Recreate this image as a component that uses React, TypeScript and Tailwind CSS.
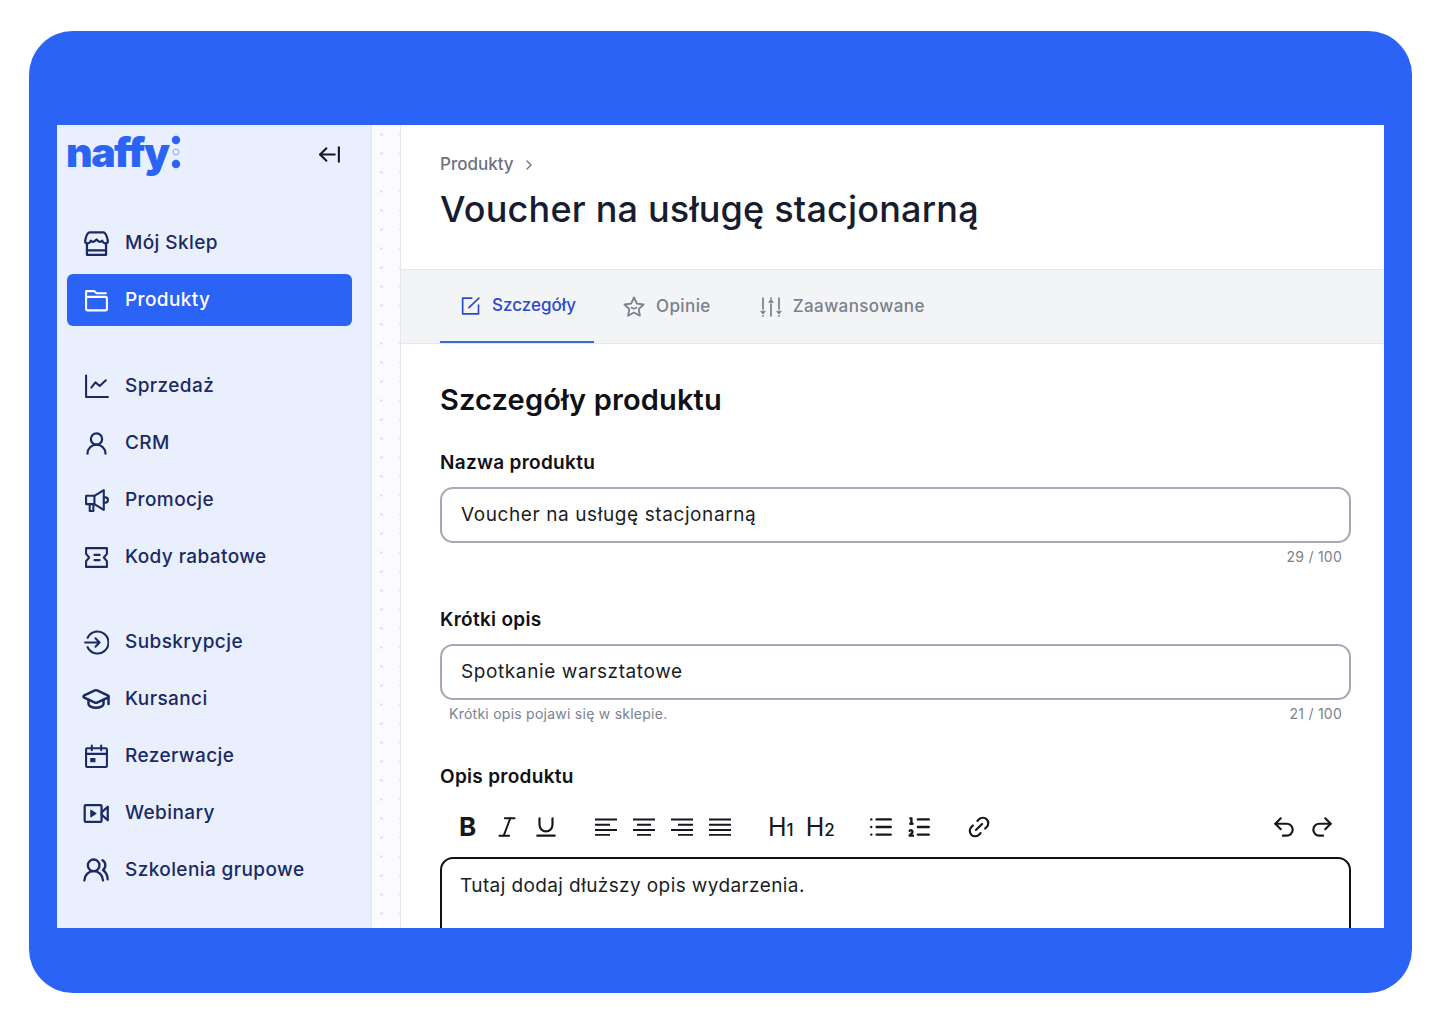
import {
  ArrowLeftFromLine,
  ChevronRight,
  GraduationCap,
  Italic,
  Link2,
  List,
  ListOrdered,
  Redo2,
  Underline,
  Undo2,
  UserRound,
  UsersRound,
} from 'lucide-react';
import type { ReactNode } from 'react';

const font = "font-['Inter','Liberation_Sans',sans-serif]";

function Svg({ children, className = 'w-[25px] h-[25px] shrink-0' }: { children: ReactNode; className?: string }) {
  return (
    <svg
      viewBox="0 0 24 24"
      fill="none"
      stroke="currentColor"
      strokeWidth={2}
      strokeLinecap="round"
      strokeLinejoin="round"
      className={className}
    >
      {children}
    </svg>
  );
}

const StoreIcon = () => (
  <Svg className="w-[27px] h-[27px] shrink-0">
    <path d="M6 2h12c2 0 3 2 4 7v2c-2 1.500-4 1-5-1.500-1 1.500-3 1.500-5-1-2 2.500-4 2.500-5 1-1 2.500-3 3-5 1.500V9c1-5 2-7 4-7z" />
    <path d="M3.500 12.500V22h17v-9.500M3.500 18h17" />
  </Svg>
);

const FolderIcon = () => (
  <Svg>
    <path d="M3 3h7l2 2h9" />
    <rect x="2" y="8.500" width="20" height="13" rx="1.500" />
    <path d="M2 8.500V3" />
  </Svg>
);

const ChartIcon = () => (
  <Svg>
    <path d="M2 1.500V22h21" />
    <path d="m7 13 4-5 4 3.500 6-5.500" />
  </Svg>
);

const MegaphoneIcon = () => (
  <Svg>
    <path d="M2 7.500h8L19 2v19l-9-5.500H2z" />
    <path d="M5.500 15.500V22H9v-6M19 9h1.500a1.500 1.500 0 0 1 0 5H19M10 7.500v8" />
  </Svg>
);

const TicketIcon = () => (
  <Svg>
    <path d="M2 3h20v5.500L19 12l3 3.500V21H2v-5.500L5 12 2 8.500z" />
    <path d="M10 9.500h5M10 14.500h5" />
  </Svg>
);

const SubscribeIcon = () => (
  <Svg>
    <path d="M3.500 7.500a10.500 10.500 0 1 1 0 9" />
    <path d="M1 12h14M11 8l4 4-4 4" />
  </Svg>
);

const CalendarIcon = () => (
  <Svg>
    <rect x="2" y="4" width="20" height="18" rx="1" />
    <path d="M2 9.500h20M7.500 1.500V6M16.500 1.500V6" />
    <path d="M6.500 14h4v3h-4z" fill="currentColor" strokeWidth={1} />
  </Svg>
);

const VideoIcon = () => (
  <Svg className="w-[27px] h-[27px] shrink-0">
    <rect x="1.500" y="4.500" width="15" height="15" rx="1" />
    <path d="m16.500 11 5.500-5v12l-5.500-5" />
    <path d="M7 9v6l4.500-3z" fill="currentColor" strokeWidth={1} />
  </Svg>
);

const PenSquareIcon = () => (
  <Svg className="w-[20px] h-[20px] shrink-0">
    <path d="M13 2.500H2v19h19V11" />
    <path d="M9.500 14 21.500 2.500" />
  </Svg>
);

const StarSmileIcon = () => (
  <Svg className="w-[24px] h-[24px] shrink-0">
    <path strokeWidth={1.800} d="m12 2.500 2.900 6.100 6.600.9-4.800 4.600 1.200 6.600L12 17.500l-5.900 3.200 1.200-6.600L2.500 9.500l6.600-.9z" />
    <path strokeWidth={1.600} d="M9.500 12.500c1.200 1.500 3.800 1.500 5 0" />
  </Svg>
);

const SortIcon = () => (
  <Svg className="w-[24px] h-[24px] shrink-0">
    <g strokeWidth={1.700}>
      <path d="M4 3v11M4 20.500v.5M12 3v.5M12 9v12M20 3v11M20 20.500v.5" />
      <path d="m2 16.500 2 2.500 2-2.500zM10 7l2-2.500L14 7zM18 16.500l2 2.500 2-2.500z" fill="currentColor" strokeWidth={1} />
    </g>
  </Svg>
);

// four-line align glyphs, lucide's current ones only have three
const alignPaths = {
  left: 'M1 3h22M1 9.300h15M1 15.600h22M1 21.500h15',
  center: 'M1 3h22M5 9.300h14M1 15.600h22M5 21.500h14',
  right: 'M1 3h22M8 9.300h15M1 15.600h22M8 21.500h15',
  justify: 'M1 3h22M1 9.300h22M1 15.600h22M1 21.500h22',
};

function AlignIcon({ kind }: { kind: keyof typeof alignPaths }) {
  return (
    <svg viewBox="0 0 24 24" className="w-[24px] h-[20px] shrink-0" fill="none" stroke="currentColor" strokeWidth={2.200} preserveAspectRatio="none">
      <path d={alignPaths[kind]} />
    </svg>
  );
}

function NavItem({ icon, label, active }: { icon: ReactNode; label: string; active?: boolean }) {
  return (
    <div
      className={`flex items-center gap-[17px] h-[52px] pl-[17px] rounded-md text-[19px] font-medium tracking-[0.4px] ${
        active ? 'bg-[#2b63f6] text-white' : 'text-[#1b2a63]'
      }`}
    >
      <span className="flex w-6 h-6 items-center justify-center">{icon}</span>
      <span>{label}</span>
    </div>
  );
}

function Sidebar() {
  return (
    <aside className="w-[315px] shrink-0 bg-[#e9effd] pl-[10px] pr-[19px] border-r border-[#dfe6f6]">
      <div className="flex items-center justify-between h-[58px] pr-[10px]">
        <div className="flex items-center gap-[2px] pt-[2px] -ml-[1px]">
          <span className="text-[41px] leading-none font-black tracking-[-1.500px] text-[#2b63f6] pb-[5px]">naffy</span>
          <svg viewBox="0 0 12 34" className="w-[12px] h-[34px] text-[#2b63f6] mb-[6px]">
            <circle cx="6" cy="5" r="4.200" fill="currentColor" />
            <circle cx="6" cy="17" r="3" fill="none" stroke="#8aa4e8" strokeWidth={1} />
            <circle cx="6" cy="29" r="4.200" fill="currentColor" />
          </svg>
        </div>
        <ArrowLeftFromLine className="w-[25px] h-[25px] text-[#111827]" strokeWidth={2} />
      </div>

      <div className="flex flex-col gap-[5px] mt-[34px]">
        <NavItem icon={<StoreIcon />} label="Mój Sklep" />
        <NavItem icon={<FolderIcon />} label="Produkty" active />
      </div>

      <div className="flex flex-col gap-[5px] mt-[34px]">
        <NavItem icon={<ChartIcon />} label="Sprzedaż" />
        <NavItem icon={<UserRound className="w-[27px] h-[27px] shrink-0" strokeWidth={2} />} label="CRM" />
        <NavItem icon={<MegaphoneIcon />} label="Promocje" />
        <NavItem icon={<TicketIcon />} label="Kody rabatowe" />
      </div>

      <div className="flex flex-col gap-[5px] mt-[33px]">
        <NavItem icon={<SubscribeIcon />} label="Subskrypcje" />
        <NavItem icon={<GraduationCap className="w-[30px] h-[30px] shrink-0" strokeWidth={2} />} label="Kursanci" />
        <NavItem icon={<CalendarIcon />} label="Rezerwacje" />
        <NavItem icon={<VideoIcon />} label="Webinary" />
        <NavItem icon={<UsersRound className="w-[28px] h-[28px] shrink-0" strokeWidth={2} />} label="Szkolenia grupowe" />
      </div>
    </aside>
  );
}

function Field({ label, value, hint, count }: { label: string; value: string; hint?: string; count: string }) {
  return (
    <div>
      <div className="text-[19px] leading-[26px] font-semibold tracking-[0.3px] text-[#0f1115]">{label}</div>
      <div className="mt-[11px] flex items-center h-[56px] border-2 border-[#a3a9b5] rounded-[13px] pl-[19px] text-[19px] tracking-[0.6px] text-[#1a1d24]">
        {value}
      </div>
      <div className="flex justify-between h-[27px] items-center px-[9px] text-[14px] tracking-[0.25px] text-[#7b8290]">
        <span>{hint}</span>
        <span>{count}</span>
      </div>
    </div>
  );
}

function Toolbar() {
  const cls = 'w-[26px] h-[26px] shrink-0';
  return (
    <div className="flex items-center justify-between h-[40px] mt-[17px] pl-[19px] pr-[16px] text-[#15171c]">
      <div className="flex items-center">
        <span className="w-[22px] text-[26px] font-bold leading-none">B</span>
        <Italic className={`${cls} ml-[13px] w-[20px]`} strokeWidth={1.800} />
        <Underline className={`${cls} ml-[13px] w-[24px]`} strokeWidth={2} />
        <div className="flex gap-[14px] ml-[35px]">
          <AlignIcon kind="left" />
          <AlignIcon kind="center" />
          <AlignIcon kind="right" />
          <AlignIcon kind="justify" />
        </div>
        <div className="flex gap-[12px] ml-[36px] text-[25px] leading-none">
          <span>
            H<span className="text-[17px] font-medium">1</span>
          </span>
          <span>
            H<span className="text-[17px] font-medium">2</span>
          </span>
        </div>
        <div className="flex gap-[12px] ml-[33px]">
          <List className={cls} strokeWidth={2.200} />
          <ListOrdered className={cls} strokeWidth={2.200} />
        </div>
        <Link2 className={`${cls} ml-[34px] -rotate-45`} strokeWidth={2} />
      </div>
      <div className="flex gap-[12px]">
        <Undo2 className={cls} strokeWidth={2} />
        <Redo2 className={cls} strokeWidth={2} />
      </div>
    </div>
  );
}

function Main() {
  return (
    <main className="flex-1 bg-white overflow-hidden border-l border-[#e5e7ef]">
      <header className="h-[145px] pl-[39px] pt-[27px] border-b border-[#e5e7eb]">
        <div className="flex items-center gap-[7px] h-[26px] text-[17px] font-medium text-[#6b7280]">
          Produkty
          <ChevronRight className="w-[16px] h-[16px]" strokeWidth={2} />
        </div>
        <h1 className="mt-[6px] text-[36px] leading-[50px] font-medium tracking-[0.2px] text-[#171c2e]">
          Voucher na usługę stacjonarną
        </h1>
      </header>

      <nav className="flex h-[74px] pl-[39px] bg-[#f3f4f6] border-b border-[#e5e7eb] text-[17px] font-medium tracking-[0.4px] text-[#7a808c]">
        <div className="flex items-center gap-[11px] w-[154px] pl-[21px] border-b-2 border-[#3b68d8] text-[#2c49c8]">
          <PenSquareIcon />
          <span className="tracking-[0px]">Szczegóły</span>
        </div>
        <div className="flex items-center gap-[10px] ml-[28px]">
          <StarSmileIcon />
          Opinie
        </div>
        <div className="flex items-center gap-[10px] ml-[48px]">
          <SortIcon />
          Zaawansowane
        </div>
      </nav>

      <section className="pl-[39px] pr-[33px] pt-[34px]">
        <h2 className="text-[29px] leading-[44px] font-semibold tracking-[0.15px] text-[#0f1115]">Szczegóły produktu</h2>
        <div className="flex flex-col gap-[37px] mt-[28px]">
          <Field label="Nazwa produktu" value="Voucher na usługę stacjonarną" count="29 / 100" />
          <Field
            label="Krótki opis"
            value="Spotkanie warsztatowe"
            hint="Krótki opis pojawi się w sklepie."
            count="21 / 100"
          />
          <div>
            <div className="text-[19px] leading-[26px] font-semibold tracking-[0.3px] text-[#0f1115]">Opis produktu</div>
            <Toolbar />
            <div className="mt-[10px] h-[160px] border-2 border-[#111] rounded-[13px] pl-[18px] pt-[15px] text-[19px] leading-[24px] tracking-[0.4px] text-[#1a1d24]">
              Tutaj dodaj dłuższy opis wydarzenia.
            </div>
          </div>
        </div>
      </section>
    </main>
  );
}

export default function App() {
  return (
    <div className={`w-[1440px] h-[1024px] bg-white pt-[31px] pl-[29px] ${font}`}>
      <div className="w-[1383px] h-[962px] bg-[#2b63f6] rounded-[44px] pt-[94px] px-[28px]">
        <div className="flex h-[803px] overflow-hidden">
          <Sidebar />
          <div className="w-[28px] shrink-0 bg-[#fbfbfd] bg-[radial-gradient(circle,#e0e2ea_1px,transparent_1.5px)] bg-[length:19px_19px]" />
          <Main />
        </div>
      </div>
    </div>
  );
}
